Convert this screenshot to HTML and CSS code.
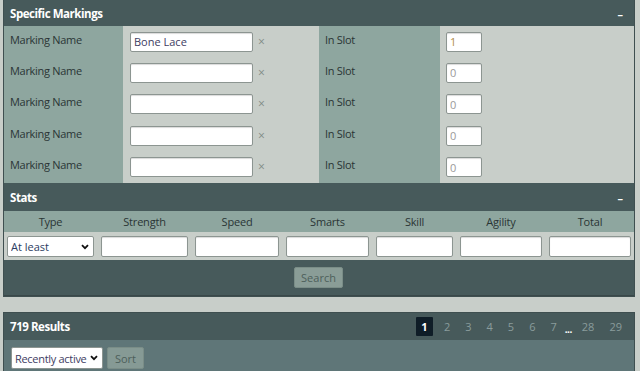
FILE: index.html
```html
<!DOCTYPE html>
<html>
<head>
<meta charset="utf-8">
<link rel="stylesheet" href="styles.css">
</head>
<body>
<div class="panel">
  <div class="panel-head"><span class="title">Specific Markings</span><span class="toggle">–</span></div>
  <div class="markings">
    <div class="lbl">Marking Name</div>
    <div class="val"><input class="name" type="text" value="Bone Lace"><span class="clear">×</span></div>
    <div class="lbl">In Slot</div>
    <div class="val"><input class="slot filled" type="text" value="1"></div>

    <div class="lbl">Marking Name</div>
    <div class="val"><input class="name" type="text"><span class="clear">×</span></div>
    <div class="lbl">In Slot</div>
    <div class="val"><input class="slot" type="text" value="0"></div>

    <div class="lbl">Marking Name</div>
    <div class="val"><input class="name" type="text"><span class="clear">×</span></div>
    <div class="lbl">In Slot</div>
    <div class="val"><input class="slot" type="text" value="0"></div>

    <div class="lbl">Marking Name</div>
    <div class="val"><input class="name" type="text"><span class="clear">×</span></div>
    <div class="lbl">In Slot</div>
    <div class="val"><input class="slot" type="text" value="0"></div>

    <div class="lbl">Marking Name</div>
    <div class="val"><input class="name" type="text"><span class="clear">×</span></div>
    <div class="lbl">In Slot</div>
    <div class="val"><input class="slot" type="text" value="0"></div>
  </div>
  <div class="panel-head stats-title"><span class="title">Stats</span><span class="toggle">–</span></div>
  <div class="stats-head">
    <div>Type</div><div>Strength</div><div>Speed</div><div>Smarts</div><div>Skill</div><div>Agility</div><div>Total</div>
  </div>
  <div class="stats-row">
    <select class="type"><option>At least</option><option>At most</option></select>
    <input type="text"><input type="text"><input type="text"><input type="text"><input type="text"><input type="text">
  </div>
  <div class="search-bar"><button class="btn search-btn">Search</button></div>
</div>

<div class="panel results">
  <div class="panel-head">
    <span class="title">719 Results</span>
    <div class="pager">
      <span class="page current">1</span>
      <span class="page">2</span>
      <span class="page">3</span>
      <span class="page">4</span>
      <span class="page">5</span>
      <span class="page">6</span>
      <span class="page">7</span>
      <span class="dots">...</span>
      <span class="page">28</span>
      <span class="page">29</span>
    </div>
  </div>
  <div class="results-body">
    <select class="sort"><option>Recently active</option><option>Newest</option></select>
    <button class="btn sort-btn">Sort</button>
  </div>
</div>
</body>
</html>
```

FILE: styles.css
```css
* { box-sizing: border-box; }
html, body { margin: 0; padding: 0; }
body {
  background: #c8cec9;
  font-family: "Open Sans", "Noto Sans", sans-serif;
  font-size: 11px;
  color: #2e3a3a;
  width: 640px;
  height: 371px;
  overflow: hidden;
}
.panel {
  margin-left: 3px;
  width: 632px;
  border: 1px solid #3f4f50;
  border-top: none;
  background: #475a5b;
}
.panel-head {
  height: 26px;
  display: flex;
  align-items: center;
  justify-content: space-between;
  padding: 0 11px 0 6px;
  background: #475a5b;
  color: #ffffff;
}
.stats-title { height: 28px; }
.title { font-weight: bold; font-size: 11.5px; letter-spacing: -0.45px; }
.toggle { font-weight: bold; font-size: 11px; }

.markings {
  display: grid;
  grid-template-columns: 119px 196px 121px 1fr;
  grid-template-rows: 31px 31px 32px 31px 32px;
}
.lbl {
  background: #8ea69f;
  padding: 6px 0 0 6px;
  font-size: 11px;
  font-weight: 500;
  letter-spacing: -0.3px;
  color: #2a3535;
}
.val {
  background: #c8cec9;
  display: flex;
  align-items: center;
  padding-left: 6px;
}
input, select {
  font-family: "Open Sans", "Noto Sans", sans-serif;
  font-size: 11px;
}
input[type=text] {
  height: 20px;
  background: #fff;
  border: 1px solid #8c9591;
  border-radius: 2px;
  box-shadow: inset 0 1px 1px rgba(0,0,0,0.15);
  padding: 0 3px;
  color: #3e3d62;
  outline: none;
}
.name { width: 123px; margin-left: 1px; }
.clear { color: #7f8a86; font-size: 12px; margin-left: 5px; line-height: 1; }
.slot { width: 36px; color: #9a9a9a !important; }
.slot.filled { color: #b08c48 !important; }

.stats-head {
  display: grid;
  grid-template-columns: 87px 87px 84px 83px 77px 82px 1fr;
  column-gap: 7px;
  padding: 0 3px;
  height: 21px;
  align-items: center;
  background: #8ea69f;
  text-align: center;
  color: #2a3535;
  font-weight: 500;
  letter-spacing: -0.2px;
}
.stats-row {
  display: grid;
  grid-template-columns: 87px 87px 84px 83px 77px 82px 1fr;
  column-gap: 7px;
  padding: 4px 3px 3px;
  height: 28px;
  align-items: center;
  background: #c8cec9;
}
.stats-row input[type=text] { width: 100%; height: 21px; }
select {
  -webkit-appearance: none;
  appearance: none;
  height: 21px;
  background-color: #fff;
  background-image: url("data:image/svg+xml,%3Csvg xmlns='http://www.w3.org/2000/svg' width='8' height='6' viewBox='0 0 8 6'%3E%3Cpath d='M1 1.2 L4 4.2 L7 1.2' fill='none' stroke='%23111' stroke-width='1.8'/%3E%3C/svg%3E");
  background-repeat: no-repeat;
  background-position: right 4px center;
  border: 1px solid #8c9591;
  border-radius: 2px;
  color: #2c3d62;
  padding: 0 0 0 3px;
}
.type { width: 87px; }
.search-bar {
  height: 36px;
  display: flex;
  justify-content: center;
  align-items: center;
  background: #475a5b;
  border-bottom: 1px solid #3a4849;
}
.btn {
  all: unset;
  box-sizing: border-box;
  font-family: "Open Sans", "Noto Sans", sans-serif;
  font-size: 11px;
  background: #8a9d97;
  border: 1px solid #7a8d87;
  border-radius: 2px;
  color: #4d605b;
  height: 21px;
  display: inline-flex;
  align-items: center;
  justify-content: center;
}
.search-btn { width: 49px; margin-right: 1px; }

.results {
  margin-top: 15px;
  border-top: 1px solid #3f4f50;
}
.results .panel-head { height: 27px; padding-right: 5px; }
.pager { display: flex; align-items: center; }
.page {
  font-size: 11px;
  color: #8a9c9c;
  height: 19px;
  padding: 0 7px;
  display: inline-flex;
  align-items: center;
  justify-content: center;
  margin-left: 1px;
}
.page.current {
  background: #0f1d27;
  color: #fff;
  font-weight: bold;
  border-radius: 1px;
  width: 17px;
  padding: 0;
  margin-left: 0;
  margin-right: 3px;
}
.dots { color: #fff; font-weight: bold; font-size: 10px; margin: 4px 2px 0 1px; letter-spacing: -0.5px; }
.results-body {
  background: #5f7678;
  height: 40px;
  display: flex;
  align-items: flex-start;
  padding: 7px 6px;
  gap: 4px;
}
.sort { width: 92px; height: 22px; margin-left: 1px; color: #3e3d62; font-size: 11px; letter-spacing: -0.3px; }
.sort-btn { width: 37px; height: 22px; background: #869a95; }
```
